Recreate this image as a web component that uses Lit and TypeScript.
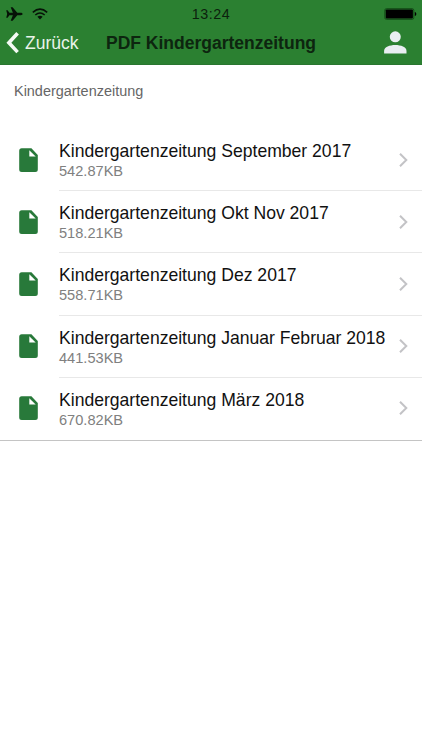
import { LitElement, html, css } from "lit";
import { customElement } from "lit/decorators.js";

interface Doc {
  name: string;
  size: string;
}

const docs: Doc[] = [
  { name: "Kindergartenzeitung September 2017", size: "542.87KB" },
  { name: "Kindergartenzeitung Okt Nov 2017", size: "518.21KB" },
  { name: "Kindergartenzeitung Dez 2017", size: "558.71KB" },
  { name: "Kindergartenzeitung Januar Februar 2018", size: "441.53KB" },
  { name: "Kindergartenzeitung März 2018", size: "670.82KB" },
];

@customElement("app-header")
class AppHeader extends LitElement {
  static styles = css`
    :host { display: block; height: 65px; background: #2b8031; box-sizing: border-box; border-bottom: 1px solid #2a7630; }
    .status { display: grid; grid-template-columns: 1fr auto 1fr; align-items: center; height: 27px; }
    .left { display: flex; align-items: center; gap: 9px; padding-left: 6px; }
    .time { font-size: 14.3px; letter-spacing: 0.5px; padding-top: 2px; color: #0b200d; height: 27px; box-sizing: border-box; line-height: 25px; }
    .right { display: flex; justify-content: flex-end; padding-right: 5px; }
    .nav { display: grid; grid-template-columns: 106px 1fr 38px; height: 32px; align-items: center; }
    .back { display: flex; align-items: center; gap: 5px; padding-left: 6px; color: #e9f3ea; font-size: 17.5px; }
    .title { font-size: 17.5px; font-weight: 700; color: #0d250f; white-space: nowrap; }
    .user { justify-self: start; }
    svg { display: block; }
  `;
  render() {
    return html`
      <div class="status">
        <div class="left">
          <svg width="17" height="14" viewBox="0 0 17 14" fill="#061207">
            <path d="M0.2 3.300h1.400l1.800 2.500h3.500L4.700.3h1.900l4.700 5.500h3.500c1.100 0 1.800.6 1.800 1.200s-.7 1.200-1.800 1.200h-3.500l-4.700 5.500H4.700l2.200-5.500H3.400l-1.800 2.500H.2L1.200 7z"/>
          </svg>
          <svg width="16" height="12" viewBox="0 0 16 12" fill="none" stroke="#061207" stroke-width="1.6">
            <path d="M.8 4.300Q8-1.900 15.200 4.300M3.300 7Q8 3 12.700 7"/>
            <path d="M5.400 8.800Q8 6.800 10.600 8.800L8 11.500z" fill="#061207" stroke="none"/>
          </svg>
        </div>
        <div class="time">13:24</div>
        <div class="right">
          <svg width="33" height="12" viewBox="0 0 33 12">
            <rect x=".8" y=".6" width="29" height="10.8" rx="1.6" fill="none" stroke="#155019" stroke-width="1"/>
            <rect x="1.7" y="1.4" width="27.2" height="9.2" rx=".8" fill="#000"/>
            <path d="M30.8 4c2 .5 2 3.500 0 4z" fill="#000"/>
          </svg>
        </div>
      </div>
      <div class="nav">
        <div class="back">
          <svg width="14" height="22" viewBox="0 0 14 22" fill="none" stroke="#f4faf4" stroke-width="3.6">
            <path d="M11.600 1.300L2.900 10.700l8.700 9.400"/>
          </svg>
          <span>Zurück</span>
        </div>
        <div class="title">PDF Kindergartenzeitung</div>
        <svg class="user" width="24" height="24" viewBox="0 0 24 24" fill="#e9eef2">
          <circle cx="11.300" cy="5.800" r="5.500"/>
          <path d="M.1 22.400v-2.500c0-3.800 5.600-5.900 11.200-5.900s11.200 2.100 11.200 5.900v2.500z"/>
        </svg>
      </div>
    `;
  }
}

@customElement("doc-row")
class DocRow extends LitElement {
  static properties = { doc: { attribute: false } };
  declare doc: Doc;
  static styles = css`
    :host { display: grid; grid-template-columns: 59px 1fr; height: 62.2px; }
    .icon { display: flex; align-items: center; padding: 0 0 1px 19px; }
    .body { display: flex; align-items: center; justify-content: space-between; border-bottom: 1px solid #e8e8e8; padding-right: 14px; }
    :host(:last-of-type) .body { border-bottom-color: transparent; }
    .name { font-size: 17.58px; line-height: 22px; color: #111; white-space: nowrap; }
    .size { font-size: 14.6px; line-height: 18px; color: #808080; }
    .text { width: 330px; flex: none; padding-top: 1px; }
    svg { display: block; flex: none; }
  `;
  render() {
    return html`
      <div class="icon">
        <svg width="19" height="24" viewBox="0 0 19 24">
          <path d="M2.700.2h9.700L18.800 7v14.400a2.500 2.500 0 0 1-2.500 2.500H2.700A2.500 2.500 0 0 1 .2 21.400V2.700A2.500 2.500 0 0 1 2.700.2z" fill="#28793a"/>
          <path d="M10.300 2.200v6.300h6.400z" fill="#fff"/>
        </svg>
      </div>
      <div class="body">
        <div class="text">
          <div class="name">${this.doc.name}</div>
          <div class="size">${this.doc.size}</div>
        </div>
        <svg width="9" height="14" viewBox="0 0 9 14" fill="none" stroke="#c3c3c6" stroke-width="2">
          <path d="M1 .8L7.300 7 1 13.200"/>
        </svg>
      </div>
    `;
  }
}

@customElement("app-root")
class AppRoot extends LitElement {
  static styles = css`
    :host { display: block; height: 750px; background: #fff; font-family: "Liberation Sans", Arial, sans-serif; overflow: hidden; }
    .section { height: 64px; box-sizing: border-box; padding: 17px 14px 0; font-size: 14.45px; line-height: 18px; color: #666; }
    .list { border-bottom: 1px solid #c4c4c4; }
  `;
  render() {
    return html`
      <app-header></app-header>
      <div class="section">Kindergartenzeitung</div>
      <div class="list">${docs.map((d) => html`<doc-row .doc=${d}></doc-row>`)}</div>
    `;
  }
}
